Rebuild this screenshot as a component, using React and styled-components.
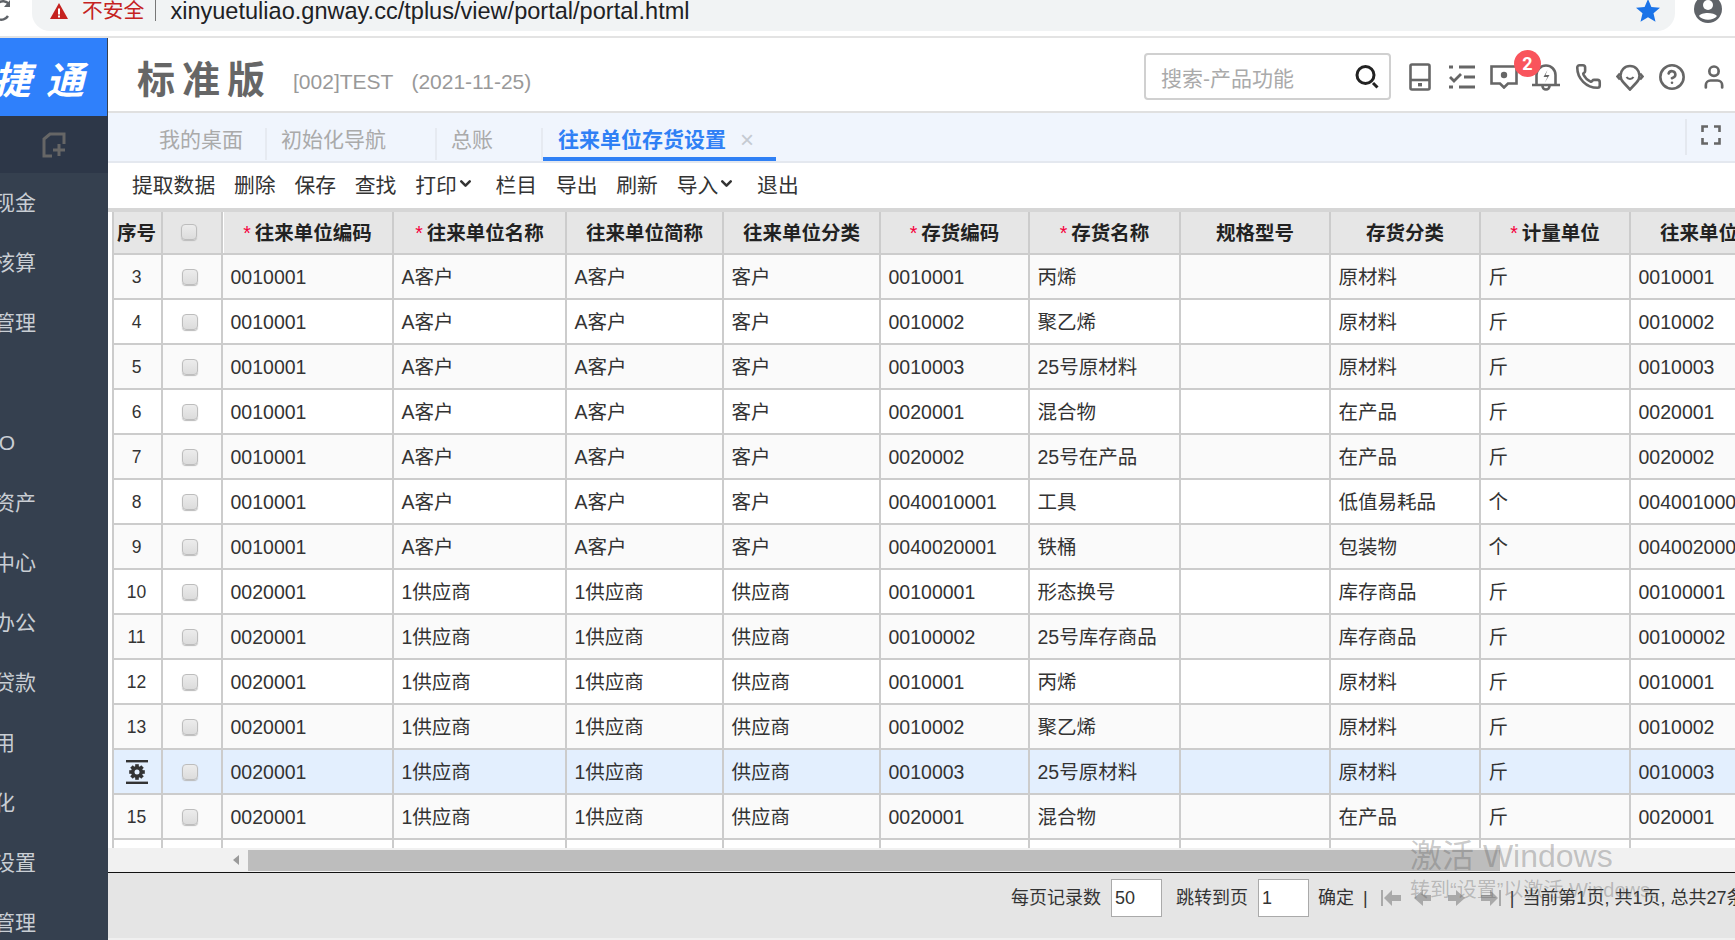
import React from 'react';
import styled, { createGlobalStyle } from 'styled-components';
import { ChevronDown, CircleHelp, Phone, User } from 'lucide-react';

const GlobalStyle = createGlobalStyle`
  html, body { margin: 0; padding: 0; height: 100%; overflow: hidden; background: #fff; }
  body { font-family: "Liberation Sans", "Noto Sans CJK SC", sans-serif; color: #333; }
  * { box-sizing: border-box; }
`;

const Page = styled.div`
  width: 1735px;
  height: 940px;
  position: relative;
  overflow: hidden;
  display: flex;
  flex-direction: column;
`;

/* browser chrome */
const BrowserBar = styled.div`
  height: 38px;
  flex: none;
  display: flex;
  align-items: flex-start;
  border-bottom: 2px solid #e3e3e3;
  padding-right: 13px;
  overflow: hidden;
`;
const Reload = styled.svg`
  width: 32px;
  height: 22px;
  flex: none;
`;
const Omnibox = styled.div`
  width: 1643px;
  height: 31px;
  flex: none;
  background: #f1f3f4;
  border-radius: 0 0 18px 18px;
  display: flex;
  align-items: flex-start;
  padding-left: 17px;
`;
const WarnIcon = styled.svg`
  width: 20px;
  height: 18px;
  margin-top: 2px;
  flex: none;
`;
const Insecure = styled.span`
  margin-left: 13px;
  font-size: 20.8px;
  line-height: 21px;
  color: #c5221f;
  padding-right: 11px;
  border-right: 1px solid #777;
`;
const Url = styled.span`
  margin-left: 14px;
  font-size: 23.55px;
  line-height: 22px;
  color: #202124;
  flex: 1;
`;
const Star = styled.svg`
  width: 24px;
  height: 22px;
  margin-right: 15px;
  flex: none;
`;
const Avatar = styled.svg`
  width: 30px;
  height: 24px;
  margin-left: 18px;
  flex: none;
`;

/* app shell */
const Shell = styled.div`
  flex: 1;
  display: flex;
  min-height: 0;
`;
const Sidebar = styled.aside`
  width: 108px;
  flex: none;
  background: #35404f;
  overflow: hidden;
`;
const Logo = styled.div`
  width: 107px;
  height: 78px;
  background: #2f80fb;
  display: flex;
  justify-content: flex-end;
  align-items: center;
  overflow: hidden;
  white-space: nowrap;
  padding-right: 8px;
  color: #fff;
  font-size: 38px;
  font-weight: 700;
  font-style: italic;
  letter-spacing: 15px;
`;
const Collapse = styled.div`
  height: 57px;
  background: #2d3748;
  display: flex;
  align-items: center;
  justify-content: center;
`;
const SideItem = styled.div`
  height: 60px;
  line-height: 60px;
  font-size: 21px;
  color: #c9ced4;
  white-space: nowrap;
  overflow: hidden;
  text-indent: -48px;
`;

const Main = styled.main`
  flex: 1;
  min-width: 0;
  display: flex;
  flex-direction: column;
`;
const Header = styled.header`
  height: 75px;
  flex: none;
  display: flex;
  align-items: center;
  border-bottom: 2px solid #e0e0e0;
  padding-left: 29px;
`;
const Edition = styled.h1`
  margin: 4px 0 0;
  font-size: 38px;
  letter-spacing: 7px;
  font-weight: 700;
  color: #666;
`;
const Account = styled.span`
  margin-left: 21px;
  margin-top: 14px;
  font-size: 21px;
  color: #999;
`;
const AccountDate = styled(Account)`
  margin-left: 18px;
`;
const Search = styled.div`
  margin-left: auto;
  width: 247px;
  height: 47px;
  margin-top: 4px;
  border: 2px solid #d0d0d0;
  border-radius: 4px;
  display: flex;
  align-items: center;
  padding-left: 15px;
  font-size: 21px;
  color: #aaa;
`;
const SearchLabel = styled.span`
  flex: 1;
`;
const SearchIcon = styled.svg`
  width: 26px;
  height: 26px;
  margin-right: 9px;
`;
const IconRow = styled.div`
  display: flex;
  align-items: center;
  gap: 14px;
  margin-left: 15px;
  margin-right: 7px;
  margin-top: 4px;
  color: #666;
`;
const IconSlot = styled.span`
  width: 28px;
  height: 28px;
  position: relative;
  display: flex;
  align-items: center;
  justify-content: center;
`;
const Badge = styled.span`
  position: absolute;
  left: -18px;
  top: -13px;
  width: 27px;
  height: 27px;
  border-radius: 50%;
  background: #f9545c;
  color: #fff;
  font: 700 18px/27px Roboto, "Liberation Sans", sans-serif;
  text-align: center;
`;

const TabBar = styled.nav`
  height: 50px;
  flex: none;
  background: #f0f5fd;
  border-bottom: 2px solid #e4e8ef;
  display: flex;
  padding-left: 51px;
`;
const Tab = styled.div`
  height: 32px;
  margin-top: 15px;
  padding-left: ${p => p.$left}px;
  padding-right: ${p => p.$right}px;
  font-size: 21px;
  line-height: 24px;
  color: #aaa;
  border-right: 2px solid #e6eaf1;
`;
const ActiveTab = styled.div`
  width: 233px;
  height: 44px;
  margin-top: 4px;
  padding-left: 15px;
  border-bottom: 4px solid #2f80f5;
  font-size: 21px;
  line-height: 46px;
  font-weight: 700;
  color: #2f80f5;
  display: flex;
  white-space: nowrap;
`;
const TabClose = styled.span`
  margin-left: 14px;
  font-weight: 400;
  font-size: 24px;
  color: #c5cad2;
`;
const FullScreen = styled.div`
  margin-left: auto;
  margin-top: 6px;
  height: 36px;
  border-left: 2px solid #e4e8ef;
  padding: 6px 14px 0 14px;
`;
const Toolbar = styled.div`
  height: 45px;
  flex: none;
  display: flex;
  align-items: center;
  gap: 18.8px;
  padding: 0 0 4px 24px;
  font-size: 20.8px;
  color: #333;
`;
const ToolItem = styled.span`
  display: flex;
  align-items: center;
  margin-right: ${p => (p.$menu ? 3 : 0)}px;
`;

const GridWrap = styled.div`
  height: 640px;
  flex: none;
  border-top: 4px solid #d6d6d6;
  padding-left: 4px;
  overflow: hidden;
`;
const Grid = styled.table`
  width: 1626px;
  table-layout: fixed;
  border-collapse: separate;
  border-spacing: 0;
  font-size: 19.5px;
  line-height: 22px;
`;
const HeadCell = styled.th`
  height: 43px;
  padding: 0;
  background: #e6e6e6;
  color: #222;
  font-weight: 700;
  text-align: center;
  white-space: nowrap;
  overflow: hidden;
  border-right: 2px solid #ccc;
  border-bottom: 2px solid #ccc;
  &:first-child { border-left: 2px solid #ccc; padding-right: 2px; }
  &:nth-child(3) { box-shadow: inset 1px 0 0 #fff; }
`;
const Required = styled.span`
  color: #f5003c;
  margin-right: 4px;
  font-weight: 400;
`;
const Row = styled.tr`
  background: ${p => (p.$active ? '#e3effe' : p.$even ? '#ffffff' : '#fafafa')};
`;
const Cell = styled.td`
  height: 45px;
  padding: 0 0 0 7.5px;
  white-space: nowrap;
  overflow: hidden;
  color: #333;
  border-right: 2px solid #ccc;
  border-bottom: 2px solid #ccc;
`;
const SeqCell = styled(Cell)`
  padding: 0 2px 0 0;
  text-align: center;
  font-size: 17.5px;
  border-left: 2px solid #ccc;
`;
const CheckCell = styled(Cell)`
  padding: 0 0 0 19px;
`;
const Check = styled.span`
  display: block;
  width: 16px;
  height: 16px;
  margin-top: ${p => (p.$head ? '-2px' : 0)};
  margin-left: ${p => (p.$head ? '18px' : 0)};
  border: 1px solid #bdbdbd;
  border-radius: 4px;
  background: linear-gradient(#ececec, #dcdcdc);
  box-shadow: 0 1px 1px #bbb;
`;

const ScrollBar = styled.div`
  height: 25px;
  flex: none;
  display: flex;
  background: #f1f1f1;
  border-bottom: 1px solid #111;
`;
const ScrollLead = styled.div`
  width: 140px;
  display: flex;
  justify-content: flex-end;
  align-items: center;
  padding-right: 9px;
`;
const ScrollArrow = styled.span`
  width: 0;
  height: 0;
  border-style: solid;
  border-width: 5px 6px 5px 0;
  border-color: transparent #9a9a9a transparent transparent;
`;
const ScrollThumb = styled.div`
  width: 1252px;
  height: 21px;
  margin-top: 2px;
  background: #bdbdbd;
`;

const Footer = styled.footer`
  flex: 1;
  background: #e5e5e5;
  border-bottom: 2px solid #f0f0f0;
  display: flex;
  align-items: flex-start;
  padding: 6px 0 0 903px;
  font-size: 18px;
  white-space: nowrap;
  color: #333;
  overflow: hidden;
`;
const FootText = styled.span`
  flex: none;
  line-height: 38px;
  margin-left: ${p => p.$gap || 0}px;
`;
const PageInput = styled.span`
  flex: none;
  width: 51px;
  height: 38px;
  margin-left: 10px;
  background: #fff;
  border: 1px solid #aaa;
  padding-left: 3px;
  line-height: 36px;
`;
const PagerIcon = styled.svg`
  width: 22px;
  height: 22px;
  margin-left: ${p => p.$gap}px;
  margin-top: 8px;
  flex: none;
`;
const Watermark = styled.div`
  position: absolute;
  left: 1410px;
  top: 835px;
  pointer-events: none;
  color: rgba(90, 90, 90, 0.33);
  white-space: nowrap;
`;
const WatermarkTitle = styled.div`
  font-size: 32px;
  line-height: 42px;
`;
const WatermarkHint = styled.div`
  font-size: 20px;
  line-height: 26px;
`;

const sideItems = ['往来现金', '存货核算', '总账管理', '', 'T-UFO', '固定资产', '税务中心', '移动办公', '银行贷款', '云应用', '个性化', '基础设置', '系统管理'];
const toolbar = ['提取数据', '删除', '保存', '查找', '打印*', '栏目', '导出', '刷新', '导入*', '退出'];

const columns = [
  { title: '往来单位编码', width: 171, required: true },
  { title: '往来单位名称', width: 173, required: true },
  { title: '往来单位简称', width: 157 },
  { title: '往来单位分类', width: 157 },
  { title: '存货编码', width: 149, required: true },
  { title: '存货名称', width: 151, required: true },
  { title: '规格型号', width: 150 },
  { title: '存货分类', width: 150 },
  { title: '计量单位', width: 150, required: true },
  { title: '往来单位编码', width: 177 },
];

const cust = ['0010001', 'A客户', 'A客户', '客户'];
const supp = ['0020001', '1供应商', '1供应商', '供应商'];
const rows = [
  [3, cust, '0010001', '丙烯', '原材料', '斤'],
  [4, cust, '0010002', '聚乙烯', '原材料', '斤'],
  [5, cust, '0010003', '25号原材料', '原材料', '斤'],
  [6, cust, '0020001', '混合物', '在产品', '斤'],
  [7, cust, '0020002', '25号在产品', '在产品', '斤'],
  [8, cust, '0040010001', '工具', '低值易耗品', '个'],
  [9, cust, '0040020001', '铁桶', '包装物', '个'],
  [10, supp, '00100001', '形态换号', '库存商品', '斤'],
  [11, supp, '00100002', '25号库存商品', '库存商品', '斤'],
  [12, supp, '0010001', '丙烯', '原材料', '斤'],
  [13, supp, '0010002', '聚乙烯', '原材料', '斤'],
  [14, supp, '0010003', '25号原材料', '原材料', '斤'],
  [15, supp, '0020001', '混合物', '在产品', '斤'],
];

function Gear() {
  const teeth = [0, 45, 90, 135];
  return (
    <svg width="22" height="24" viewBox="0 0 22 24" style={{ display: 'block', margin: '0 auto' }}>
      <rect x="0" y="0" width="22" height="2.4" fill="#333" />
      <rect x="0" y="21.6" width="22" height="2.4" fill="#333" />
      {teeth.map(a => (
        <rect key={a} x="9.2" y="4.2" width="3.6" height="15.6" fill="#333" transform={`rotate(${a} 11 12)`} />
      ))}
      <circle cx="11" cy="12" r="6" fill="#333" />
      <circle cx="11" cy="12" r="2.5" fill="#e3effe" />
    </svg>
  );
}

function Pager({ gap, d }) {
  return (
    <PagerIcon $gap={gap} viewBox="0 0 22 22">
      <path d={d} fill="#a9a9a9" />
    </PagerIcon>
  );
}

const strokeProps = { fill: 'none', stroke: '#666', strokeWidth: 2.6 };

export default function App() {
  return (
    <Page>
      <GlobalStyle />
      <BrowserBar>
        <Reload viewBox="0 0 32 22">
          <path d="M9 4a8 8 0 0 0-11-1M-2 19a8 8 0 0 0 10-3" fill="none" stroke="#5f6368" strokeWidth="2.4" />
          <path d="M10 0v7H4z" fill="#5f6368" />
        </Reload>
        <Omnibox>
          <WarnIcon viewBox="0 0 20 18">
            <path d="M10 1L19 17H1z" fill="#c5221f" />
            <path d="M9 6.5h2v6H9zM9 13.6h2v2H9z" fill="#fff" />
          </WarnIcon>
          <Insecure>不安全</Insecure>
          <Url>xinyuetuliao.gnway.cc/tplus/view/portal/portal.html</Url>
          <Star viewBox="0 0 24 22">
            <path d="M12 -1l3.4 8 8.6.7-6.5 5.6 2 8.4L12 17.3 4.5 21.7l2-8.4L0 7.7 8.6 7z" fill="#1a73e8" />
          </Star>
        </Omnibox>
        <Avatar viewBox="0 0 30 24">
          <circle cx="15" cy="9" r="14" fill="#5f6368" />
          <circle cx="15" cy="5" r="5" fill="#fff" />
          <path d="M6 16c2-4 15-4 18 0-4 5-14 5-18 0z" fill="#fff" />
        </Avatar>
      </BrowserBar>
      <Shell>
        <Sidebar>
          <Logo>畅捷通</Logo>
          <Collapse>
            <svg width="24" height="26" viewBox="0 0 24 26" fill="none" stroke="#666" strokeWidth="3">
              <path d="M10 24H2V7l6-5h14v10" />
              <path d="M17 12v12M11 18h12" />
            </svg>
          </Collapse>
          {sideItems.map((item, i) => (
            <SideItem key={i}>{item}</SideItem>
          ))}
        </Sidebar>
        <Main>
          <Header>
            <Edition>标准版</Edition>
            <Account>[002]TEST</Account>
            <AccountDate>(2021-11-25)</AccountDate>
            <Search>
              <SearchLabel>搜索-产品功能</SearchLabel>
              <SearchIcon viewBox="0 0 26 26">
                <circle cx="11.5" cy="11" r="8.5" fill="none" stroke="#222" strokeWidth="3" />
                <path d="M19 19l4.5 4.5" stroke="#222" strokeWidth="3" />
              </SearchIcon>
            </Search>
            <IconRow>
              <IconSlot>
                <svg width="22" height="28" viewBox="0 0 22 28" {...strokeProps}>
                  <rect x="1.5" y="1.5" width="19" height="25" rx="1.5" />
                  <path d="M1.5 17h19" />
                  <rect x="9" y="20" width="4" height="3.4" fill="#666" stroke="none" />
                </svg>
              </IconSlot>
              <IconSlot>
                <svg width="26" height="26" viewBox="0 0 26 26" {...strokeProps}>
                  <path d="M0 3h4M10 3h16M15 13h11M0 23h4M10 23h16" strokeWidth="3" />
                  <path d="M1 13l4 4 7-7" strokeWidth="2.8" />
                </svg>
              </IconSlot>
              <IconSlot>
                <svg width="28" height="24" viewBox="0 0 28 24" {...strokeProps}>
                  <path d="M1.5 1.5h25v17H18l-4 4-4-4H1.500z" />
                  <circle cx="14" cy="10" r="3.200" fill="#666" stroke="none" />
                </svg>
              </IconSlot>
              <IconSlot>
                <svg width="28" height="28" viewBox="0 0 28 28" {...strokeProps}>
                  <path d="M0 22h28M4.500 22V12a9.500 9.500 0 0 1 19 0v10" />
                  <path d="M10.500 23a3.500 3.500 0 0 0 7 0" />
                  <path d="M15.500 7l-4 7h4l-3 6 5-8h-4z" fill="#666" stroke="none" />
                </svg>
                <Badge>2</Badge>
              </IconSlot>
              <IconSlot>
                <Phone size={27} strokeWidth={2.3} />
              </IconSlot>
              <IconSlot>
                <svg width="28" height="28" viewBox="0 0 28 28" {...strokeProps}>
                  <path d="M14 26.500L7.500 19.500a9.500 9.500 0 1 1 13 0z" />
                  <path d="M4 10.500L1.500 13.500 4 16.500M24 10.500l2.500 3L24 16.500" />
                  <path d="M10.500 14c1.500 2.500 5.500 2.500 7 0" strokeWidth="2" />
                </svg>
              </IconSlot>
              <IconSlot>
                <CircleHelp size={30} strokeWidth={2.2} />
              </IconSlot>
              <IconSlot>
                <User size={32} strokeWidth={2.3} />
              </IconSlot>
            </IconRow>
          </Header>
          <TabBar>
            <Tab $left={0} $right={22}>我的桌面</Tab>
            <Tab $left={14} $right={49}>初始化导航</Tab>
            <Tab $left={14} $right={48}>总账</Tab>
            <ActiveTab>
              往来单位存货设置
              <TabClose>×</TabClose>
            </ActiveTab>
            <FullScreen>
              <svg width="20" height="20" viewBox="0 0 20 20" fill="none" stroke="#666" strokeWidth="2.6">
                <path d="M7 1.500H1.500V7M13 1.500h5.500V7M7 18.500H1.500V13M13 18.500h5.500V13" />
              </svg>
            </FullScreen>
          </TabBar>
          <Toolbar>
            {toolbar.map(t =>
              t.endsWith('*') ? (
                <ToolItem key={t} $menu>
                  {t.slice(0, -1)}
                  <ChevronDown size={17} strokeWidth={3.6} />
                </ToolItem>
              ) : (
                <ToolItem key={t}>{t}</ToolItem>
              ),
            )}
          </Toolbar>
          <GridWrap>
            <Grid>
              <colgroup>
                <col width="51" />
                <col width="60" />
                {columns.map((c, i) => (
                  <col key={i} width={c.width} />
                ))}
              </colgroup>
              <thead>
                <tr>
                  <HeadCell>序号</HeadCell>
                  <HeadCell>
                    <Check $head />
                  </HeadCell>
                  {columns.map((c, i) => (
                    <HeadCell key={i}>
                      {c.required && <Required>*</Required>}
                      {c.title}
                    </HeadCell>
                  ))}
                </tr>
              </thead>
              <tbody>
                {rows.map(([no, partner, code, name, kind, unit]) => (
                  <Row key={no} $even={no % 2 === 0 && no !== 14} $active={no === 14}>
                    <SeqCell>{no === 14 ? <Gear /> : no}</SeqCell>
                    <CheckCell>
                      <Check />
                    </CheckCell>
                    {partner.map((v, i) => (
                      <Cell key={i}>{v}</Cell>
                    ))}
                    <Cell>{code}</Cell>
                    <Cell>{name}</Cell>
                    <Cell />
                    <Cell>{kind}</Cell>
                    <Cell>{unit}</Cell>
                    <Cell>{code}</Cell>
                  </Row>
                ))}
                <Row $even>
                  <SeqCell />
                  <CheckCell />
                  {columns.map((c, i) => (
                    <Cell key={i} />
                  ))}
                </Row>
              </tbody>
            </Grid>
          </GridWrap>
          <ScrollBar>
            <ScrollLead>
              <ScrollArrow />
            </ScrollLead>
            <ScrollThumb />
          </ScrollBar>
          <Footer>
            <FootText>每页记录数</FootText>
            <PageInput>50</PageInput>
            <FootText $gap={14}>跳转到页</FootText>
            <PageInput>1</PageInput>
            <FootText $gap={9}>确定</FootText>
            <FootText $gap={9}>|</FootText>
            <Pager gap={12} d="M1 3h2v16H1zM4 11l8-8v5h9v6h-9v5z" />
            <Pager gap={11} d="M1 11l9-8v5h8v6h-8v5z" />
            <Pager gap={9} d="M21 11l-9-8v5H4v6h8v5z" />
            <Pager gap={14} d="M21 3h-2v16h2zM18 11l-8-8v5H1v6h9v5z" />
            <FootText $gap={8}>|</FootText>
            <FootText $gap={8}>当前第1页, 共1页, 总共27条记录</FootText>
          </Footer>
        </Main>
      </Shell>
      <Watermark>
        <WatermarkTitle>激活 Windows</WatermarkTitle>
        <WatermarkHint>转到“设置”以激活 Windows。</WatermarkHint>
      </Watermark>
    </Page>
  );
}
